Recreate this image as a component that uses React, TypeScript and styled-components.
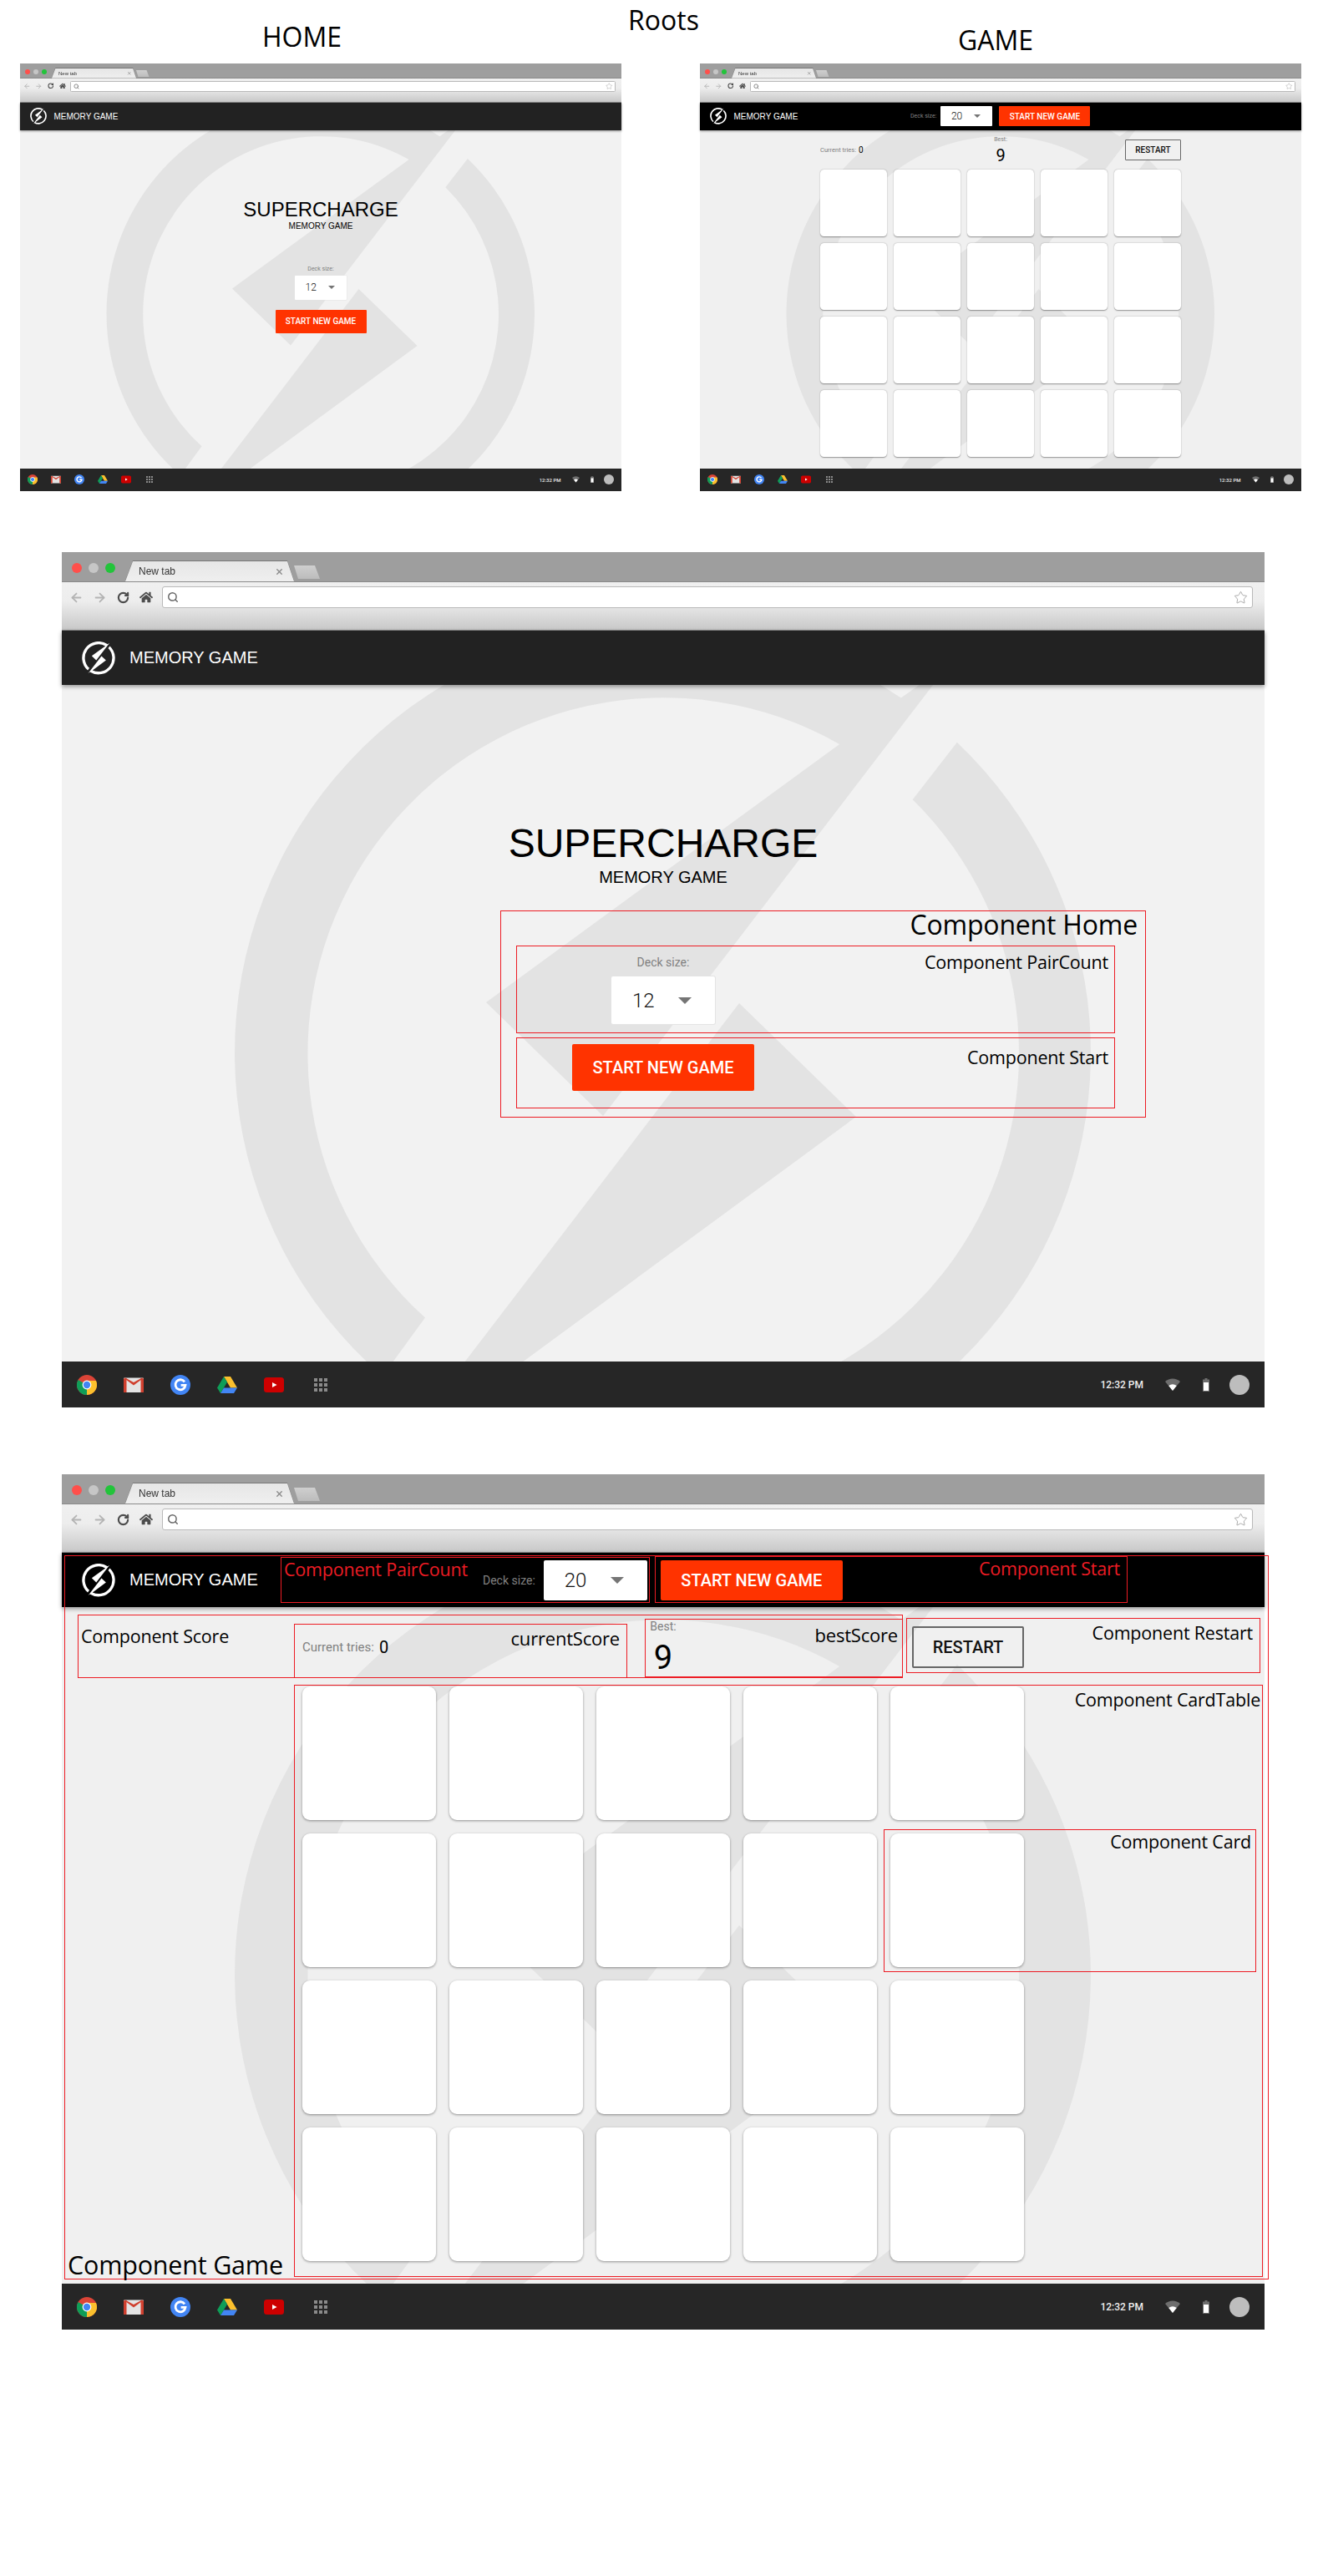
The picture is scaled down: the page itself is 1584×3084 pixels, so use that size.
import styled, { createGlobalStyle } from "styled-components";
import { ArrowLeft, ArrowRight, RotateCw, Search, Star, X } from "lucide-react";
import { FaHome } from "react-icons/fa";

const GlobalStyle = createGlobalStyle`
  html, body {
    margin: 0;
    padding: 0;
    background: #fff;
  }
  * {
    box-sizing: border-box;
  }
`;

const Page = styled.div`
  width: 1584px;
  height: 3084px;
  overflow: hidden;
  background: #fff;
  color: #000;
  font-family: "Liberation Sans", Arial, sans-serif;
`;

const TitleRow = styled.div`
  display: grid;
  grid-template-columns: 752px 95px 1fr;
  height: 76px;
`;

const Title = styled.div<{ $left: number; $top: number }>`
  padding-left: ${(p) => p.$left}px;
  padding-top: ${(p) => p.$top}px;
  font-family: "Open Sans", sans-serif;
  font-size: 32px;
  line-height: 40px;
`;

const SmallRow = styled.div`
  display: flex;
  justify-content: space-between;
  padding: 0 26px 0 24px;
`;

const FullSlot = styled.div<{ $top: number }>`
  margin-top: ${(p) => p.$top}px;
  padding-left: 74px;
`;

const Frame = styled.div<{ $scale?: number; $bg: string }>`
  position: relative;
  width: 1440px;
  height: 1024px;
  zoom: ${(p) => p.$scale ?? 1};
  display: flex;
  flex-direction: column;
  background: ${(p) => p.$bg};
`;

const Watermark = styled.svg`
  position: absolute;
  left: 0;
  top: 0;
  width: 1440px;
  height: 1024px;
`;

/* browser chrome */
const ChromeBar = styled.div`
  position: relative;
  height: 94px;
  flex: none;
`;

const TabStrip = styled.div`
  display: flex;
  align-items: flex-start;
  height: 36px;
  padding-left: 12px;
  background: #9e9e9e;
  border-bottom: 1px solid #8a8a8a;
`;

const Lights = styled.div`
  display: flex;
  gap: 8px;
  padding-top: 13px;
  width: 64px;
`;

const Light = styled.span<{ $color: string }>`
  width: 12px;
  height: 12px;
  border-radius: 50%;
  background: ${(p) => p.$color};
`;

const TabEdge = styled.div`
  margin-top: 11px;
  filter: drop-shadow(0 -1px 0 #777);
`;

const Tab = styled.div`
  display: flex;
  align-items: center;
  justify-content: space-between;
  width: 202px;
  height: 24px;
  padding: 0 12px 0 16px;
  background: linear-gradient(#e6e6e6, #efefef);
  clip-path: polygon(9px 0, 194px 0, 202px 100%, 0 100%);
  font-size: 12px;
  color: #333;
`;

const NewTab = styled.div`
  width: 31px;
  height: 16px;
  margin-top: 16px;
  background: linear-gradient(#cfcfcf, #bcbcbc);
  clip-path: polygon(0 0, 25px 0, 31px 100%, 5px 100%);
`;

const Toolbar = styled.div`
  display: flex;
  align-items: flex-start;
  height: 58px;
  padding: 5px 14px 0 3px;
  background: linear-gradient(#f0f0f0, #ededed 40%, #c8c8c8);
  border-bottom: 1px solid #8c8c8c;
`;

const NavButton = styled.div<{ $color: string }>`
  display: flex;
  align-items: center;
  justify-content: center;
  width: 28px;
  height: 26px;
  color: ${(p) => p.$color};
`;

const Address = styled.div`
  display: flex;
  align-items: center;
  justify-content: space-between;
  flex: 1;
  height: 26px;
  margin-left: 5px;
  padding: 0 5px;
  background: #fff;
  border: 1px solid #b9b9b9;
  border-radius: 3px;
  color: #666;
`;

/* app header */
const AppHeader = styled.header<{ $bg: string }>`
  position: relative;
  display: flex;
  align-items: center;
  flex: none;
  height: 65px;
  padding-left: 24px;
  background: ${(p) => p.$bg};
  box-shadow: 0 2px 5px rgba(0, 0, 0, 0.4);
`;

const Brand = styled.div`
  display: flex;
  align-items: center;
  gap: 17px;
  width: 480px;
  font-size: 20px;
  color: #fff;
`;

const DeckLabel = styled.span`
  font-family: Roboto, sans-serif;
  font-size: 14px;
  line-height: 20px;
  color: #808080;
`;

const TriesLabel = styled(DeckLabel)`
  font-size: 15px;
`;

const Select = styled.div<{ $height: number; $border?: boolean }>`
  display: flex;
  align-items: center;
  justify-content: space-between;
  width: 124px;
  height: ${(p) => p.$height}px;
  padding: 0 28px 0 25px;
  background: #fff;
  border-radius: 2px;
  box-shadow: ${(p) => (p.$border ? "0 0 0 1px #e4e4e4" : "none")};
  font-family: Roboto, sans-serif;
  font-weight: 300;
  font-size: 24px;
  color: #111;
`;

const Caret = styled.span`
  width: 0;
  height: 0;
  border-left: 8px solid transparent;
  border-right: 8px solid transparent;
  border-top: 8px solid #757575;
`;

const StartButton = styled.button<{ $height: number }>`
  width: 218px;
  height: ${(p) => p.$height}px;
  padding: 0;
  border: 0;
  border-radius: 2px;
  background: #ff3300;
  color: #fff;
  font-family: Roboto, sans-serif;
  font-weight: 500;
  font-size: 20px;
`;

const HeaderControls = styled.div`
  display: flex;
  align-items: center;
  span + div {
    margin-left: 10px;
  }
  button {
    margin-left: 16px;
  }
`;

/* home screen */
const HomeMain = styled.main`
  position: relative;
  flex: 1;
  display: flex;
  flex-direction: column;
  align-items: center;
  padding-top: 162px;
`;

const Heading = styled.h1`
  margin: 0;
  font-weight: 400;
  font-size: 48px;
  line-height: 56px;
`;

const SubHeading = styled.div`
  font-size: 20px;
  line-height: 24px;
`;

const HomeDeck = styled.div`
  display: flex;
  flex-direction: column;
  align-items: center;
  gap: 7px;
  margin-top: 80px;
  margin-bottom: 24px;
`;

/* game screen */
const GameMain = styled.main`
  position: relative;
  flex: 1;
  padding: 13px 288px 0;
`;

const ScoreRow = styled.div`
  display: grid;
  grid-template-columns: 1fr 1fr 1fr;
  align-items: start;
  height: 82px;
`;

const CurrentScore = styled.div`
  display: flex;
  align-items: center;
  gap: 6px;
  height: 70px;
`;

const Count = styled.span`
  font-family: Roboto, sans-serif;
  font-weight: 400;
  font-size: 20px;
  color: #000;
`;

const BestScore = styled.div`
  display: flex;
  flex-direction: column;
  align-items: center;
`;

const BestValue = styled.div`
  margin-top: 6px;
  font-family: Roboto, sans-serif;
  font-weight: 400;
  font-size: 40px;
  line-height: 44px;
`;

const RestartButton = styled.button`
  justify-self: end;
  width: 134px;
  height: 50px;
  margin-top: 10px;
  padding: 0;
  background: transparent;
  border: 2px solid #666;
  border-radius: 2px;
  color: #111;
  font-family: Roboto, sans-serif;
  font-weight: 500;
  font-size: 20px;
`;

const CardGrid = styled.div`
  display: grid;
  grid-template-columns: repeat(5, 160px);
  grid-auto-rows: 160px;
  gap: 16px;
`;

const Card = styled.div`
  background: #fff;
  border-radius: 9px;
  box-shadow: 0 1px 3px rgba(0, 0, 0, 0.4);
`;

/* OS shelf */
const Shelf = styled.footer`
  position: relative;
  display: flex;
  align-items: center;
  flex: none;
  height: 55px;
  padding: 0 18px;
  background: #262626;
`;

const ShelfApps = styled.div`
  display: flex;
  gap: 32px;
`;

const ShelfTray = styled.div`
  display: flex;
  align-items: center;
  margin-left: auto;
`;

const Clock = styled.span`
  margin-right: 26px;
  font-family: Roboto, sans-serif;
  font-weight: 500;
  font-size: 12px;
  color: #eee;
`;

const TrayIcon = styled.svg<{ $gap: number }>`
  margin-right: ${(p) => p.$gap}px;
`;

const Avatar = styled.span`
  width: 24px;
  height: 24px;
  border-radius: 50%;
  background: #bdbdbd;
`;

/* red annotation boxes drawn over the mockups */
const Note = styled.div<{
  $x: number;
  $y: number;
  $w: number;
  $h: number;
  $pad: string;
  $left?: boolean;
  $bottom?: boolean;
}>`
  position: absolute;
  left: ${(p) => p.$x}px;
  top: ${(p) => p.$y}px;
  width: ${(p) => p.$w}px;
  height: ${(p) => p.$h}px;
  display: flex;
  justify-content: ${(p) => (p.$left ? "flex-start" : "flex-end")};
  align-items: ${(p) => (p.$bottom ? "flex-end" : "flex-start")};
  padding: ${(p) => p.$pad};
  border: 1px solid #ed1c24;
  pointer-events: none;
`;

const NoteLabel = styled.span<{ $size: number; $red?: boolean }>`
  font-family: "Open Sans", sans-serif;
  font-size: ${(p) => p.$size}px;
  line-height: 1;
  letter-spacing: -0.2px;
  white-space: nowrap;
  color: ${(p) => (p.$red ? "#ed1c24" : "#000")};
`;

function LogoPaths() {
  return (
    <>
      <path d="M1063 133 L1004.8 174.5 A512 512 0 0 0 384 986.5 L435 916.5 A426 426 0 0 1 931.1 230 L508 539 L648 675 Z" />
      <path d="M394 1085 L448.7 1034 A512 512 0 0 0 1071.8 227.8 L1018.7 296.3 A426 426 0 0 1 533.4 983 L951 676 L811 540 Z" />
    </>
  );
}

function ChromeIcon() {
  return (
    <svg width="24" height="24" viewBox="0 0 24 24">
      <circle cx="12" cy="12" r="12" fill="#db4437" />
      <path d="M12 12 L1.6 6 A12 12 0 0 0 12 24 Z" fill="#0f9d58" />
      <path d="M12 7 H23 A12 12 0 0 1 12 24 L12 12 Z" fill="#fbc02d" />
      <circle cx="12" cy="12" r="5.4" fill="#fff" />
      <circle cx="12" cy="12" r="4.2" fill="#4285f4" />
    </svg>
  );
}

function GmailIcon() {
  return (
    <svg width="24" height="24" viewBox="0 0 24 24">
      <rect x="0" y="3.5" width="24" height="17.5" rx="1" fill="#e4e4e4" />
      <path d="M0 21 V4.5 L3.5 4 V21 Z M24 21 V4.5 L20.5 4 V21 Z" fill="#d0402f" />
      <path d="M0.5 4 L12 12.5 L23.5 4 L22 3.5 L12 9 L2 3.5 Z" fill="#d0402f" />
    </svg>
  );
}

function GoogleIcon() {
  return (
    <svg width="24" height="24" viewBox="0 0 24 24">
      <circle cx="12" cy="12" r="12" fill="#4285f4" />
      <path
        d="M17 8.4 A6 6 0 1 0 18 12.4 H12.6"
        fill="none"
        stroke="#fff"
        strokeWidth="2.8"
      />
    </svg>
  );
}

function DriveIcon() {
  return (
    <svg width="24" height="24" viewBox="0 0 24 24">
      <path d="M8 2 H16 L24 15.5 H16 Z" fill="#fbc02d" />
      <path d="M8 2 L12 8.8 L4 22 L0 15.5 Z" fill="#0f9d58" />
      <path d="M8 15.5 H24 L20 22 H4 Z" fill="#4285f4" />
    </svg>
  );
}

function YoutubeIcon() {
  return (
    <svg width="24" height="24" viewBox="0 0 24 24">
      <rect x="0" y="3" width="24" height="18" rx="3.5" fill="#cd0000" />
      <path d="M10 9 L15.5 12 L10 15 Z" fill="#fff" />
    </svg>
  );
}

function AppsIcon() {
  const cells = [4, 10, 16];
  return (
    <svg width="24" height="24" viewBox="0 0 24 24" fill="#8a8a8a">
      {cells.map((y) =>
        cells.map((x) => <rect key={`${x}-${y}`} x={x} y={y} width="4" height="4" />)
      )}
    </svg>
  );
}

function Chrome() {
  return (
    <ChromeBar>
      <TabStrip>
        <Lights>
          <Light $color="#ff4f4b" />
          <Light $color="#c6c6c6" />
          <Light $color="#22c43a" />
        </Lights>
        <TabEdge>
          <Tab>
            New tab
            <X size={11} strokeWidth={3} color="#8a8a8a" />
          </Tab>
        </TabEdge>
        <NewTab />
      </TabStrip>
      <Toolbar>
        <NavButton $color="#b4b4b4">
          <ArrowLeft size={17} strokeWidth={2.5} />
        </NavButton>
        <NavButton $color="#b4b4b4">
          <ArrowRight size={17} strokeWidth={2.5} />
        </NavButton>
        <NavButton $color="#4c4c4c">
          <RotateCw size={15} strokeWidth={3.4} />
        </NavButton>
        <NavButton $color="#4c4c4c">
          <FaHome size={16} />
        </NavButton>
        <Address>
          <Search size={14} strokeWidth={2.5} />
          <Star size={17} strokeWidth={1} color="#888" />
        </Address>
      </Toolbar>
    </ChromeBar>
  );
}

function OsShelf() {
  return (
    <Shelf>
      <ShelfApps>
        <ChromeIcon />
        <GmailIcon />
        <GoogleIcon />
        <DriveIcon />
        <YoutubeIcon />
        <AppsIcon />
      </ShelfApps>
      <ShelfTray>
        <Clock>12:32 PM</Clock>
        <TrayIcon $gap={27} width="18" height="16" viewBox="0 0 18 16">
          <path d="M0 4 A13 13 0 0 1 18 4 L9 15 Z" fill="#6e6e6e" />
          <path d="M4.2 9 A8 8 0 0 1 13.8 9 L9 15 Z" fill="#fff" />
        </TrayIcon>
        <TrayIcon $gap={24} width="8" height="16" viewBox="0 0 8 16">
          <path d="M2.5 0 H5.5 V1.5 H8 V16 H0 V1.5 H2.5 Z" fill="#6e6e6e" />
          <rect x="1" y="5" width="6" height="10" fill="#fff" />
        </TrayIcon>
        <Avatar />
      </ShelfTray>
    </Shelf>
  );
}

function Logo() {
  return (
    <svg width="40" height="40" viewBox="200 88 1040 1040" fill="#fff">
      <LogoPaths />
    </svg>
  );
}

function Background() {
  return (
    <Watermark viewBox="0 0 1440 1024" fill="#e3e3e3">
      <LogoPaths />
    </Watermark>
  );
}

function HomeScreen({ scale, children }: { scale?: number; children?: React.ReactNode }) {
  return (
    <Frame $scale={scale} $bg="#f2f2f2">
      <Background />
      <Chrome />
      <AppHeader $bg="#222">
        <Brand>
          <Logo />
          MEMORY GAME
        </Brand>
      </AppHeader>
      <HomeMain>
        <Heading>SUPERCHARGE</Heading>
        <SubHeading>MEMORY GAME</SubHeading>
        <HomeDeck>
          <DeckLabel>Deck size:</DeckLabel>
          <Select $height={57} $border>
            12
            <Caret />
          </Select>
        </HomeDeck>
        <StartButton $height={56}>START NEW GAME</StartButton>
      </HomeMain>
      <OsShelf />
      {children}
    </Frame>
  );
}

function GameScreen({ scale, children }: { scale?: number; children?: React.ReactNode }) {
  const cards = Array.from({ length: 20 }, (_, i) => i);
  return (
    <Frame $scale={scale} $bg="#f0f0f0">
      <Background />
      <Chrome />
      <AppHeader $bg="#000">
        <Brand>
          <Logo />
          MEMORY GAME
        </Brand>
        <HeaderControls>
          <DeckLabel>Deck size:</DeckLabel>
          <Select $height={48}>
            20
            <Caret />
          </Select>
          <StartButton $height={48}>START NEW GAME</StartButton>
        </HeaderControls>
      </AppHeader>
      <GameMain>
        <ScoreRow>
          <CurrentScore>
            <TriesLabel>Current tries:</TriesLabel>
            <Count>0</Count>
          </CurrentScore>
          <BestScore>
            <DeckLabel>Best:</DeckLabel>
            <BestValue>9</BestValue>
          </BestScore>
          <RestartButton>RESTART</RestartButton>
        </ScoreRow>
        <CardGrid>
          {cards.map((i) => (
            <Card key={i} />
          ))}
        </CardGrid>
      </GameMain>
      <OsShelf />
      {children}
    </Frame>
  );
}

export default function App() {
  return (
    <Page>
      <GlobalStyle />
      <TitleRow>
        <Title $left={314} $top={24}>HOME</Title>
        <Title $left={0} $top={4}>Roots</Title>
        <Title $left={300} $top={28}>GAME</Title>
      </TitleRow>
      <SmallRow>
        <HomeScreen scale={0.5} />
        <GameScreen scale={0.5} />
      </SmallRow>
      <FullSlot $top={73}>
        <HomeScreen>
          <Note $x={525} $y={429} $w={773} $h={248} $pad="0 9px">
            <NoteLabel $size={32}>Component Home</NoteLabel>
          </Note>
          <Note $x={544} $y={471} $w={717} $h={105} $pad="8px 7px">
            <NoteLabel $size={21.5}>Component PairCount</NoteLabel>
          </Note>
          <Note $x={544} $y={581} $w={717} $h={85} $pad="12px 7px">
            <NoteLabel $size={21.5}>Component Start</NoteLabel>
          </Note>
        </HomeScreen>
      </FullSlot>
      <FullSlot $top={80}>
        <GameScreen>
          <Note $x={3} $y={97} $w={1442} $h={867} $pad="0 3px 2px" $left $bottom>
            <NoteLabel $size={30.5}>Component Game</NoteLabel>
          </Note>
          <Note $x={262} $y={99} $w={442} $h={55} $pad="3px 3px" $left>
            <NoteLabel $size={21.5} $red>Component PairCount</NoteLabel>
          </Note>
          <Note $x={710} $y={98} $w={566} $h={56} $pad="3px 8px">
            <NoteLabel $size={21.5} $red>Component Start</NoteLabel>
          </Note>
          <Note $x={19} $y={168} $w={988} $h={76} $pad="14px 3px" $left>
            <NoteLabel $size={21.5}>Component Score</NoteLabel>
          </Note>
          <Note $x={278} $y={179} $w={399} $h={65} $pad="5px 8px">
            <NoteLabel $size={22}>currentScore</NoteLabel>
          </Note>
          <Note $x={698} $y={173} $w={309} $h={70} $pad="7px 5px">
            <NoteLabel $size={22}>bestScore</NoteLabel>
          </Note>
          <Note $x={1011} $y={172} $w={424} $h={66} $pad="6px 8px">
            <NoteLabel $size={21.5}>Component Restart</NoteLabel>
          </Note>
          <Note $x={278} $y={252} $w={1160} $h={709} $pad="6px 2px">
            <NoteLabel $size={21.5}>Component CardTable</NoteLabel>
          </Note>
          <Note $x={984} $y={425} $w={446} $h={171} $pad="3px 5px">
            <NoteLabel $size={21.5}>Component Card</NoteLabel>
          </Note>
        </GameScreen>
      </FullSlot>
    </Page>
  );
}
